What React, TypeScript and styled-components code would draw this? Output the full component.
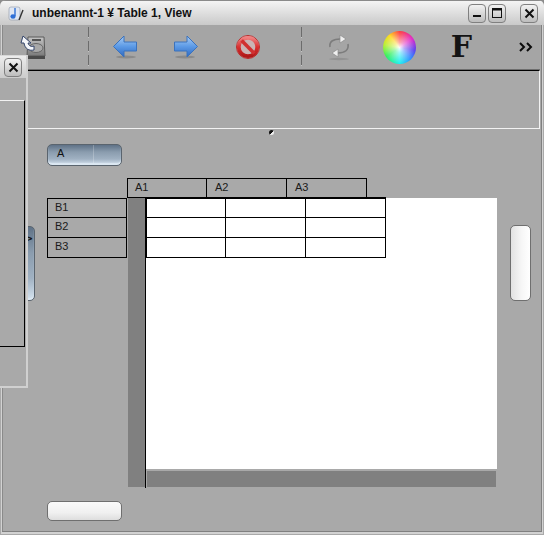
import React from "react";
import styled, { createGlobalStyle } from "styled-components";

const Global = createGlobalStyle`
  html, body {
    margin: 0;
    background: #8c8c8c;
    overflow: hidden;
  }
`;

const Win = styled.div`
  position: relative;
  box-sizing: border-box;
  width: 544px;
  height: 535px;
  display: flex;
  flex-direction: column;
  overflow: hidden;
  border-radius: 6px 6px 0 0;
  background: #a9a9a9;
  font-family: "Liberation Sans", Arial, sans-serif;
`;

const TitleBar = styled.div`
  height: 25px;
  flex: none;
  display: flex;
  align-items: center;
  box-sizing: border-box;
  padding: 0 6px 0 8px;
  border-top: 1px solid #8a8a8a;
  background: linear-gradient(#f4f4f4, #c9c9c9);
`;

const AppIcon = styled.svg`
  width: 16px;
  height: 17px;
  flex: none;
`;

const Title = styled.div`
  margin-left: 8px;
  flex: 1;
  font-size: 12px;
  font-weight: bold;
  color: #111;
`;

const WinButton = styled.div<{ $gap?: number }>`
  box-sizing: border-box;
  width: 18px;
  height: 19px;
  margin-left: ${(p) => p.$gap ?? 0}px;
  display: flex;
  align-items: center;
  justify-content: center;
  border: 1px solid #808080;
  border-radius: 4px;
  background: linear-gradient(#f2f2f2, #bdbdbd);
`;

const Body = styled.div`
  flex: 1;
  display: flex;
  flex-direction: column;
  box-sizing: border-box;
  margin: 0 1px 1px;
  padding: 0 2px 1px 1px;
  border-left: 1px solid #d2d2d2;
  border-right: 1px solid #d2d2d2;
  border-bottom: 2px solid #d2d2d2;
  box-shadow: inset 0 -1px 0 #808080, inset -1px 0 0 #808080, inset 1px 0 0 #8a8a8a;
`;

const Toolbar = styled.div`
  height: 44px;
  flex: none;
  display: flex;
  align-items: center;
  padding-left: 17px;
  background: #a5a5a5;
  border-bottom: 1px solid #6e6e6e;
`;

const ToolIcon = styled.div<{ $gap: number; $w: number }>`
  flex: none;
  width: ${(p) => p.$w}px;
  margin-left: ${(p) => p.$gap}px;
  display: flex;
  align-items: center;
  justify-content: center;
  line-height: 0;
`;

const Separator = styled.div<{ $gap: number }>`
  flex: none;
  width: 1px;
  height: 40px;
  margin-left: ${(p) => p.$gap}px;
  background: repeating-linear-gradient(#6c6c6c 0 10px, #c4c4c4 10px 11px, #a5a5a5 11px 14px);
`;

const ColorWheel = styled.div`
  width: 33px;
  height: 33px;
  border-radius: 50%;
  background:
    radial-gradient(circle, rgba(255, 255, 255, 0.95) 0, rgba(255, 255, 255, 0.55) 22%, rgba(255, 255, 255, 0) 68%),
    conic-gradient(#ff4040, #e02ac8 55deg, #5a40f0 100deg, #3090ff 135deg, #20f0f0 180deg, #30f060 235deg, #b8f030 280deg, #ffd820 320deg, #ff4040);
`;

const FontGlyph = styled.span`
  font-family: "DejaVu Serif", "Liberation Serif", serif;
  font-weight: bold;
  font-size: 30px;
  line-height: 30px;
  color: #141414;
`;

const TopPanel = styled.div`
  height: 59px;
  flex: none;
  box-sizing: border-box;
  border-top: 1px solid #000;
  border-right: 1px solid #f2f2f2;
  border-bottom: 1px solid #f2f2f2;
`;

const Grip = styled.div`
  position: absolute;
  left: 269px;
  top: 130px;
  width: 5px;
  height: 5px;
  border-radius: 50%;
  background: linear-gradient(135deg, #111 55%, #eee 55%);
`;

const Canvas = styled.div`
  flex: 1;
  display: flex;
  flex-direction: column;
  padding-top: 15px;
`;

const GlassButton = styled.div`
  box-sizing: border-box;
  border: 1px solid #5a646e;
  border-radius: 5px;
  color: #111;
  background: linear-gradient(#5f7287 0, #8a9cae 35%, #a0b1c2 70%, #d6e4f0 100%);
  box-shadow: inset 0 -2px 1px #dce8f2;
`;

const LabelButton = styled(GlassButton)`
  width: 75px;
  height: 22px;
  margin-left: 44px;
  flex: none;
  padding: 1px 0 0 9px;
  font-size: 11px;
  line-height: 15px;
  background:
    linear-gradient(90deg, transparent 45px, rgba(255, 255, 255, 0.22) 45px, rgba(255, 255, 255, 0.22) 46px, transparent 46px),
    linear-gradient(#5f7287 0, #8a9cae 35%, #a0b1c2 70%, #d6e4f0 100%);
`;

const Workspace = styled.div`
  display: flex;
  align-items: flex-start;
  margin-top: 12px;
  padding-left: 11px;
`;

const SideHandle = styled(GlassButton)`
  width: 21px;
  height: 75px;
  margin-top: 48px;
  flex: none;
  padding: 8px 0 0 5px;
  font-size: 11px;
  line-height: 13px;
  writing-mode: vertical-rl;
`;

const Sheet = styled.div`
  width: 450px;
  height: 310px;
  flex: none;
  margin-left: 12px;
  display: grid;
  grid-template-columns: 80px 370px;
  grid-template-rows: 20px 290px;
  font-size: 11px;
  color: #1a1a1a;
`;

const ColHeads = styled.div`
  grid-column: 2;
  grid-row: 1;
  display: flex;
`;

const ColHead = styled.div`
  box-sizing: border-box;
  width: 80px;
  height: 20px;
  padding: 2px 0 0 8px;
  border: 1px solid #000;
  border-right: 0;
  &:first-child {
    width: 79px;
    padding-left: 7px;
  }
  &:last-child {
    width: 81px;
    border-right: 1px solid #000;
  }
`;

const RowHeads = styled.div`
  grid-column: 1;
  grid-row: 2;
  display: flex;
  flex-direction: column;
`;

const RowHead = styled.div`
  box-sizing: border-box;
  height: 20px;
  padding: 2px 0 0 7px;
  border: 1px solid #000;
  border-top: 0;
  &:first-child {
    border-top: 1px solid #000;
  }
`;

const DataArea = styled.div`
  grid-column: 2;
  grid-row: 2;
  display: flex;
  padding-left: 1px;
`;

const Gutter = styled.div`
  width: 17px;
  height: 289px;
  flex: none;
  background: #808080;
`;

const Page = styled.div`
  flex: 1;
  display: flex;
  flex-direction: column;
  border-left: 1px solid #000;
`;

const White = styled.div`
  height: 271px;
  flex: none;
  background: #fff;
`;

const Cells = styled.table`
  border-collapse: collapse;
  table-layout: fixed;
  width: 240px;
  height: 60px;
  margin: -1px 0 0 -1px;
  td {
    box-sizing: border-box;
    width: 80px;
    height: 20px;
    padding: 0;
    border: 1px solid #000;
  }
  tr:first-child td {
    box-shadow: inset 0 1px 0 #000;
  }
  td:first-child {
    box-shadow: inset 1px 0 0 #000;
  }
  tr:first-child td:first-child {
    box-shadow: inset 1px 1px 0 #000;
  }
`;

const BottomBar = styled.div`
  height: 16px;
  margin: 2px 1px 0 1px;
  background: #808080;
`;

const PlainButton = styled.div`
  box-sizing: border-box;
  border: 1px solid #6f6f6f;
  border-radius: 5px;
`;

const RightSlider = styled(PlainButton)`
  width: 21px;
  height: 76px;
  flex: none;
  margin: 47px 0 0 13px;
  background: linear-gradient(90deg, #e2e2e2, #f6f6f6 55%, #fff);
`;

const WideButton = styled(PlainButton)`
  width: 75px;
  height: 20px;
  flex: none;
  margin: 13px 0 0 44px;
  background: linear-gradient(#fafafa, #f0f0f0 60%, #dedede);
`;

const Palette = styled.div`
  position: absolute;
  left: 0;
  top: 55px;
  width: 28px;
  height: 333px;
  box-sizing: border-box;
  display: flex;
  flex-direction: column;
  background: #a9a9a9;
  border-right: 2px solid #d0d0d0;
  border-bottom: 2px solid #d0d0d0;
  border-top: 1px solid #d8d8d8;
`;

const PaletteHead = styled.div`
  height: 22px;
  flex: none;
  display: flex;
  align-items: center;
  padding-left: 4px;
  background: linear-gradient(#ececec, #cbcbcb);
`;

const PaletteFrame = styled.div`
  box-sizing: border-box;
  width: 25px;
  height: 247px;
  margin-top: 22px;
  border-top: 1px solid #f2f2f2;
  border-right: 1px solid #000;
  border-bottom: 1px solid #000;
`;

const CloseGlyph = () => (
  <svg width="11" height="11" viewBox="0 0 11 11">
    <path d="M1.5 1.5l8 8M9.5 1.5l-8 8" stroke="#111" strokeWidth="2" fill="none" />
  </svg>
);

const DiskIcon = () => (
  <svg width="26" height="25" viewBox="0 0 26 25">
    <defs>
      <linearGradient id="disk" x1="0" y1="0" x2="0" y2="1">
        <stop offset="0" stopColor="#c4c4c4" />
        <stop offset="1" stopColor="#7a7a7a" />
      </linearGradient>
    </defs>
    <path d="M8 2h16l1 19H7z" fill="url(#disk)" stroke="#5a5a5a" />
    <rect x="12" y="4" width="9" height="2" fill="#555" />
    <ellipse cx="16" cy="13" rx="7" ry="4.5" fill="#a8a8a8" stroke="#666" />
    <rect x="7" y="21" width="18" height="3" fill="#4a4a4a" />
    <path d="M3 1l-2 7h3c1 6 5 8 10 7v-4c-3 1-5 0-6-3h3z" fill="#f4f6fa" stroke="#34456b" strokeWidth="1" />
  </svg>
);

const ArrowIcon = ({ flip = false, id }: { flip?: boolean; id: string }) => (
  <svg width="24" height="24" viewBox="0 0 24 24" style={flip ? { transform: "scaleX(-1)" } : undefined}>
    <defs>
      <linearGradient id={id} x1="0" y1="0" x2="0" y2="1">
        <stop offset="0" stopColor="#a9cdf5" />
        <stop offset="0.5" stopColor="#5c9ae6" />
        <stop offset="1" stopColor="#2e68c0" />
      </linearGradient>
    </defs>
    <ellipse cx="13" cy="22" rx="10" ry="1.5" fill="#8a8a8a" />
    <path d="M0.5 11.5L11 1v6h12.5v9H11v6z" fill={`url(#${id})`} stroke="#3b72bd" strokeWidth="1" strokeLinejoin="round" />
  </svg>
);

const StopIcon = () => (
  <svg width="24" height="24" viewBox="0 0 24 24">
    <defs>
      <linearGradient id="stopRing" x1="0" y1="0" x2="0" y2="1">
        <stop offset="0" stopColor="#f08080" />
        <stop offset="0.5" stopColor="#d83030" />
        <stop offset="1" stopColor="#b01818" />
      </linearGradient>
    </defs>
    <circle cx="12" cy="12" r="11.5" fill="#c9b4b4" stroke="#b92a2a" strokeWidth="1" />
    <circle cx="12" cy="12" r="9.2" fill="none" stroke="url(#stopRing)" strokeWidth="3.8" />
    <path d="M5.6 5.6l12.8 12.8" stroke="#d03030" strokeWidth="3.6" />
  </svg>
);

const RefreshIcon = () => (
  <svg width="24" height="28" viewBox="0 0 24 28">
    <ellipse cx="12" cy="26" rx="10" ry="1.2" fill="#929292" />
    <path d="M3 14C2 8 7 6 13 6" fill="none" stroke="#7c7c7c" strokeWidth="1.6" />
    <path d="M13 2l6 4-6 4z" fill="#efefef" stroke="#8a8a8a" strokeWidth="0.7" />
    <path d="M21 11c1 6-3 9-10 9" fill="none" stroke="#7c7c7c" strokeWidth="1.6" />
    <path d="M11 16l-6 4 6 4z" fill="#efefef" stroke="#8a8a8a" strokeWidth="0.7" />
  </svg>
);

const MoreIcon = () => (
  <svg width="14" height="10" viewBox="0 0 14 10">
    <path d="M1 1l4 4-4 4M8 1l4 4-4 4" fill="none" stroke="#0c0c0c" strokeWidth="2" />
  </svg>
);

export default function App() {
  return (
    <Win>
      <Global />
      <TitleBar>
        <AppIcon viewBox="0 0 16 17">
          <rect x="1" y="2" width="11" height="13" rx="2" fill="#dfe6f2" stroke="#8d97a8" strokeWidth="0.6" />
          <path d="M7 3v8" stroke="#2f6fd6" strokeWidth="1.4" />
          <ellipse cx="5" cy="11.5" rx="2.6" ry="2.2" fill="#2f6fd6" />
          <path d="M11 15l4-10" stroke="#333" strokeWidth="1.4" />
        </AppIcon>
        <Title>unbenannt-1 ¥ Table 1, View</Title>
        <WinButton>
          <svg width="10" height="10" viewBox="0 0 10 10">
            <rect x="1" y="7" width="8" height="2" fill="#111" />
          </svg>
        </WinButton>
        <WinButton $gap={2}>
          <svg width="10" height="10" viewBox="0 0 10 10">
            <rect x="0.5" y="0.5" width="9" height="9" fill="none" stroke="#111" />
            <rect x="0.5" y="0.5" width="9" height="2" fill="#111" />
          </svg>
        </WinButton>
        <WinButton $gap={14}>
          <CloseGlyph />
        </WinButton>
      </TitleBar>
      <Body>
        <Toolbar>
          <ToolIcon $gap={0} $w={26}><DiskIcon /></ToolIcon>
          <Separator $gap={42} />
          <ToolIcon $gap={24} $w={24}><ArrowIcon id="back" /></ToolIcon>
          <ToolIcon $gap={37} $w={24}><ArrowIcon id="forward" flip /></ToolIcon>
          <ToolIcon $gap={38} $w={24}><StopIcon /></ToolIcon>
          <Separator $gap={41} />
          <ToolIcon $gap={25} $w={24}><RefreshIcon /></ToolIcon>
          <ToolIcon $gap={32} $w={33}><ColorWheel /></ToolIcon>
          <ToolIcon $gap={35} $w={21}><FontGlyph>F</FontGlyph></ToolIcon>
          <ToolIcon $gap={47} $w={14}><MoreIcon /></ToolIcon>
        </Toolbar>
        <TopPanel />
        <Canvas>
          <LabelButton>A</LabelButton>
          <Workspace>
            <SideHandle>A</SideHandle>
            <Sheet>
              <ColHeads>
                <ColHead>A1</ColHead>
                <ColHead>A2</ColHead>
                <ColHead>A3</ColHead>
              </ColHeads>
              <RowHeads>
                <RowHead>B1</RowHead>
                <RowHead>B2</RowHead>
                <RowHead>B3</RowHead>
              </RowHeads>
              <DataArea>
                <Gutter />
                <Page>
                  <White>
                    <Cells>
                      <tbody>
                        {[0, 1, 2].map((r) => (
                          <tr key={r}>
                            <td />
                            <td />
                            <td />
                          </tr>
                        ))}
                      </tbody>
                    </Cells>
                  </White>
                  <BottomBar />
                </Page>
              </DataArea>
            </Sheet>
            <RightSlider />
          </Workspace>
          <WideButton />
        </Canvas>
      </Body>
      <Grip />
      <Palette>
        <PaletteHead>
          <WinButton>
            <CloseGlyph />
          </WinButton>
        </PaletteHead>
        <PaletteFrame />
      </Palette>
    </Win>
  );
}
